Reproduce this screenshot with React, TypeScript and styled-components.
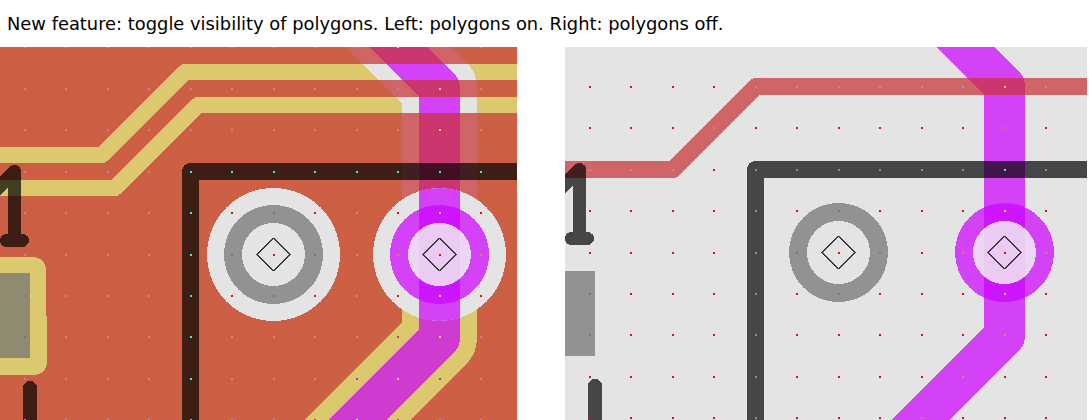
import React from "react";
import styled, { createGlobalStyle } from "styled-components";

const GlobalStyle = createGlobalStyle`
  html, body {
    margin: 0;
    background: #fff;
  }
`;

type Pt = [number, number];

const GRID_X = [25, 66, 108, 149, 191, 232, 274, 315, 357, 398, 440, 481];
const GRID_Y = [47, 89, 130, 172, 213, 255, 296, 337, 379, 420];

const PAD_Y = 254.5;
const PAD_A = 273.5;
const PAD_B = 439.5;

const MAGENTA_TOP: Pt[] = [[340, -11.5], [439.5, 88], [439.5, 254.5]];
const MAGENTA_LOW: Pt[] = [[439.5, 254.5], [439.5, 338], [289, 488.5]];
const RED_TRACE: Pt[] = [[-5, 171.5], [108.5, 171.5], [191, 88.5], [530, 88.5]];
const YELLOW_A: Pt[] = [[-5, 155], [102, 155], [185, 72], [530, 72]];
const YELLOW_B: Pt[] = [[-5, 188], [115, 188], [198, 105], [530, 105]];
const DARK_FRAME: Pt[] = [[530, 171.5], [190.5, 171.5], [190.5, 430]];

const toPoints = (pts: Pt[]) => pts.map((p) => p.join(",")).join(" ");

const distToLine = (pts: Pt[], x: number, y: number) => {
  let best = Infinity;
  for (let i = 0; i < pts.length - 1; i++) {
    const [ax, ay] = pts[i];
    const [bx, by] = pts[i + 1];
    const dx = bx - ax;
    const dy = by - ay;
    const t = Math.max(0, Math.min(1, ((x - ax) * dx + (y - ay) * dy) / (dx * dx + dy * dy)));
    best = Math.min(best, Math.hypot(x - ax - t * dx, y - ay - t * dy));
  }
  return best;
};

// drill dots change colour with whatever lies under them
const dotColor = (x: number, y: number, polygons: boolean) => {
  const live = Math.hypot(x - PAD_B, y - PAD_Y);
  const idle = Math.hypot(x - PAD_A, y - PAD_Y);
  if (live < 31.5 || idle < 31.5) return "#ff0000";
  if (live < 49.5) return x === 440 ? "#e2f010" : "#d68a20";
  if (idle < 49.5) return "#8e6e7e";
  if (live < 66.5 || idle < 66.5) return x === 440 ? "#e2f010" : "#ff0000";

  const magenta = [...MAGENTA_TOP, ...MAGENTA_LOW.slice(1)];
  const onDark = distToLine(DARK_FRAME, x, y) < 8.5;
  const onMagenta = distToLine(magenta, x, y) < 20.5;
  if (onDark) {
    if (onMagenta) return "#33f0d8";
    return polygons ? "#33f0f0" : "#5fa3a3";
  }
  if (x < 31 && y > 273 && y < 358) return "#8e6e7e";
  if (polygons) {
    if (onMagenta) return "#e6e070";
    if (distToLine(MAGENTA_LOW, x, y) < 37) return "#c0309a";
    return "#c87fb0";
  }
  if (onMagenta) return y < 100 ? "#e6e070" : "#d68a20";
  if (distToLine(RED_TRACE, x, y) < 8.5) return "#b09090";
  return "#ff0000";
};

const Page = styled.main`
  width: 1089px;
  height: 420px;
  overflow: hidden;
  background: #fff;
`;

const Caption = styled.p`
  margin: 0;
  height: 47px;
  padding-left: 7px;
  display: flex;
  align-items: center;
  font-family: "DejaVu Sans", sans-serif;
  font-size: 17.87px;
  color: #000;
  white-space: nowrap;
`;

const Boards = styled.div`
  display: flex;
  gap: 48px;
`;

const BoardSvg = styled.svg<{ $polygons: boolean }>`
  display: block;
  flex: none;
  height: 373px;
  width: ${(p) => (p.$polygons ? 517 : 522)}px;
  background: ${(p) => (p.$polygons ? "#cc5f44" : "#e4e4e4")};
  shape-rendering: crispEdges;
`;

const Track = styled.polyline<{ $width: number; $color: string }>`
  fill: none;
  stroke: ${(p) => p.$color};
  stroke-width: ${(p) => p.$width}px;
  stroke-linejoin: round;
  stroke-linecap: ${(p) => (p.$width > 30 ? "butt" : "round")};
`;

const Silk = styled.path`
  fill: none;
  stroke: rgba(0, 0, 0, 0.695);
  stroke-linejoin: round;
  stroke-linecap: round;
`;

const Disc = styled.circle<{ $color: string }>`
  fill: ${(p) => p.$color};
`;

const Band = styled.rect<{ $color: string }>`
  fill: ${(p) => p.$color};
`;

const Outline = styled.path`
  fill: #dcc86e;
`;

const Chevron = styled.polyline<{ $width: number }>`
  fill: none;
  stroke: #3c3640;
  stroke-width: ${(p) => p.$width}px;
`;

const Dot = styled.rect<{ $color: string }>`
  fill: ${(p) => p.$color};
`;

const Pad = ({ cx, live, polygons }: { cx: number; live: boolean; polygons: boolean }) => {
  const id = polygons ? "on" : "off";
  const band = (radius: number, color: string) => (
    <>
      <clipPath id={`pad-${id}-${radius}`}>
        <circle cx={cx} cy={PAD_Y} r={radius} />
      </clipPath>
      <Band
        x={419}
        y={180}
        width={41}
        height={150}
        $color={color}
        clipPath={`url(#pad-${id}-${radius})`}
      />
    </>
  );
  return (
    <g>
      {polygons && <Disc cx={cx} cy={PAD_Y} r={66.5} $color="#e4e4e4" />}
      {polygons && live && band(66.5, "#d342f7")}
      <Disc cx={cx} cy={PAD_Y} r={49.5} $color={live ? "#d342f7" : "#929292"} />
      {live && band(49.5, "#cf14ff")}
      <Disc cx={cx} cy={PAD_Y} r={31.5} $color={live ? "#ebd6f3" : "#e4e4e4"} />
      {live && band(31.5, "#ebcbf3")}
      <Chevron
        $width={1.6}
        points={toPoints([[cx, 238], [cx - 16.5, 254.5], [cx, 271]])}
      />
      <Chevron
        $width={1}
        points={toPoints([[cx, 238], [cx + 16.5, 254.5], [cx, 271]])}
      />
    </g>
  );
};

const Board = ({ polygons }: { polygons: boolean }) => {
  const id = polygons ? "on" : "off";
  const magentaUpper = toPoints(MAGENTA_TOP);
  return (
    <BoardSvg
      $polygons={polygons}
      viewBox={polygons ? "0 47 517 373" : "0 49 522 373"}
    >
      <mask id={`cross-${id}`} maskUnits="userSpaceOnUse" x={0} y={0} width={1100} height={500}>
        {polygons ? (
          <>
            <Track points={toPoints(YELLOW_A)} $width={16} $color="#fff" />
            <Track points={toPoints(YELLOW_B)} $width={16} $color="#fff" />
          </>
        ) : (
          <Track points={toPoints(RED_TRACE)} $width={17} $color="#fff" />
        )}
      </mask>

      {polygons ? (
        <>
          <Track points={toPoints(YELLOW_A)} $width={16} $color="#dcc86e" />
          <Track points={toPoints(YELLOW_B)} $width={16} $color="#dcc86e" />
          <Outline d="M0 257 H31 Q46 257 46 272 V316 H47 V360 Q47 375 32 375 H0 Z" />
          <Band x={0} y={273} width={30} height={85} $color="#8e8b70" />
          <Track points={magentaUpper} $width={75} $color="#cf6566" />
          <Track points={magentaUpper} $width={75} $color="#e4e4e4" mask={`url(#cross-${id})`} />
          <Track points={toPoints(MAGENTA_LOW)} $width={75} $color="#dcc86e" />
          <Track points={magentaUpper} $width={41} $color="#cc3670" />
          <Track points={magentaUpper} $width={41} $color="#d342f7" mask={`url(#cross-${id})`} />
          <Track points={toPoints(MAGENTA_LOW)} $width={41} $color="#cf3bd0" />
        </>
      ) : (
        <>
          <Track points={toPoints(RED_TRACE)} $width={17} $color="#cf6566" />
          <Band x={0} y={273} width={30} height={85} $color="#929292" />
          <Track points={magentaUpper} $width={41} $color="#d342f7" />
          <Track points={magentaUpper} $width={41} $color="#cc3670" mask={`url(#cross-${id})`} />
          <Track points={toPoints(MAGENTA_LOW)} $width={41} $color="#d342f7" />
        </>
      )}

      <Silk strokeWidth={17} d="M530 171.5 H190.5 V430" />
      <Silk strokeWidth={13} d="M-10 196 L14.5 171.5 V240.5 M6.5 240.5 H22.5" />
      <Silk strokeWidth={14} d="M30 388 V430" />

      <Pad cx={PAD_A} live={false} polygons={polygons} />
      <Pad cx={PAD_B} live polygons={polygons} />

      {GRID_Y.map((y) =>
        GRID_X.map((x) => (
          <Dot key={`${x}-${y}`} x={x - 1} y={y - 1} width={2} height={2} $color={dotColor(x, y, polygons)} />
        ))
      )}
    </BoardSvg>
  );
};

export default function App() {
  return (
    <Page>
      <GlobalStyle />
      <Caption>New feature: toggle visibility of polygons. Left: polygons on. Right: polygons off.</Caption>
      <Boards>
        <Board polygons />
        <Board polygons={false} />
      </Boards>
    </Page>
  );
}
